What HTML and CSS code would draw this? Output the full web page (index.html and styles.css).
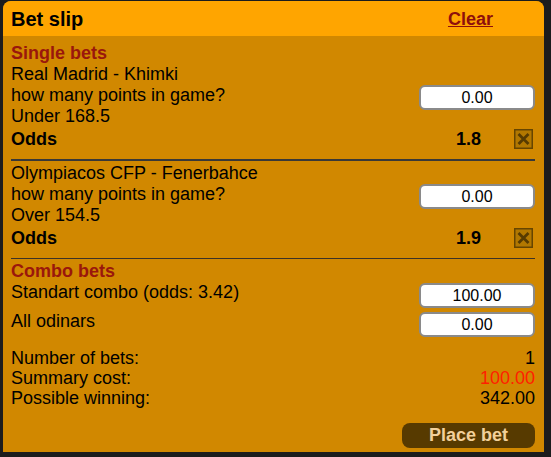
FILE: index.html
```html
<!DOCTYPE html>
<html lang="en">
<head>
  <meta charset="UTF-8">
  <meta name="viewport" content="width=device-width, initial-scale=1.0">
  <title>Bet slip</title>
  <link rel="stylesheet" href="styles.css">
</head>
<body>
  <div class="slip">
    <div class="slip-head">
      <span class="slip-title">Bet slip</span>
      <a class="clear" href="#">Clear</a>
    </div>
    <div class="slip-body">
      <div class="section-title">Single bets</div>
      <div class="bet">
        <div class="bet-info">
          <div>Real Madrid - Khimki</div>
          <div>how many points in game?</div>
          <div>Under 168.5</div>
          <input class="stake" type="text" value="0.00">
        </div>
        <div class="odds-row">
          <b class="odds-label">Odds</b>
          <b class="odds-val">1.8</b>
          <span class="remove">
            <svg width="19" height="20" viewBox="0 0 19 20">
              <rect x="0.75" y="0.75" width="17.5" height="18.5" fill="#b27800" stroke="#664500" stroke-width="1.5"/>
              <path d="M4.5 5L14.5 15M14.5 5L4.5 15" stroke="#573b00" stroke-width="2.8"/>
            </svg>
          </span>
        </div>
      </div>
      <hr class="sep sep-thick">
      <div class="bet">
        <div class="bet-info">
          <div>Olympiacos CFP - Fenerbahce</div>
          <div>how many points in game?</div>
          <div>Over 154.5</div>
          <input class="stake" type="text" value="0.00">
        </div>
        <div class="odds-row">
          <b class="odds-label">Odds</b>
          <b class="odds-val">1.9</b>
          <span class="remove">
            <svg width="19" height="20" viewBox="0 0 19 20">
              <rect x="0.75" y="0.75" width="17.5" height="18.5" fill="#b27800" stroke="#664500" stroke-width="1.5"/>
              <path d="M4.5 5L14.5 15M14.5 5L4.5 15" stroke="#573b00" stroke-width="2.8"/>
            </svg>
          </span>
        </div>
      </div>
      <hr class="sep">
      <div class="section-title">Combo bets</div>
      <div class="combo-row">
        <span>Standart combo (odds: 3.42)</span>
        <input class="stake" type="text" value="100.00">
      </div>
      <div class="combo-row">
        <span>All odinars</span>
        <input class="stake" type="text" value="0.00">
      </div>
      <div class="summary">
        <div class="sum-row"><span>Number of bets:</span><span>1</span></div>
        <div class="sum-row"><span>Summary cost:</span><span class="cost">100.00</span></div>
        <div class="sum-row"><span>Possible winning:</span><span>342.00</span></div>
      </div>
      <div class="actions">
        <button class="place-bet">Place bet</button>
      </div>
    </div>
  </div>
</body>
</html>
```
FILE: styles.css
```css
*{
  margin: 0;
  padding: 0;
  box-sizing: border-box;
}
html{
  background-color: #1c1c1d;
}
body{
  padding: 1px 7px 0 3px;
  font-family: "Liberation Sans", Arial, sans-serif;
  font-size: 18px;
  color: #000;
}
.slip{
  width: 541px;
  background-color: #d18800;
  border-radius: 8px 8px 0 0;
  overflow: hidden;
}
.slip-head{
  display: flex;
  align-items: center;
  justify-content: space-between;
  height: 35px;
  padding: 1px 51px 0 8px;
  background-color: #ffa500;
}
.slip-title{
  font-size: 20px;
  font-weight: bold;
}
.clear{
  font-weight: bold;
  color: #8e0f0c;
  text-decoration: underline;
}
.slip-body{
  padding: 7px 9px 4px 8px;
}
.section-title{
  line-height: 21px;
  font-weight: bold;
  color: #9a170c;
}
.bet-info{
  display: grid;
  grid-template-columns: 1fr auto;
  grid-auto-rows: 21px;
  line-height: 21px;
}
.bet-info > div{
  grid-column: 1;
}
.bet-info .stake{
  grid-column: 2;
  grid-row: 2 / span 2;
  align-self: start;
}
.stake{
  width: 116px;
  height: 25px;
  border: 2px solid #8a8a8a;
  border-radius: 6px;
  background-color: #fff;
  font-family: "Liberation Sans", Arial, sans-serif;
  font-size: 16px;
  color: #000;
  text-align: center;
  outline: none;
}
.odds-row{
  display: flex;
  align-items: center;
  height: 24px;
  line-height: 21px;
}
.odds-label{
  flex: 1;
}
.remove{
  display: flex;
  margin: 0 2px 0 33px;
}
.sep{
  border: none;
  height: 1px;
  margin: 8px 0 2px;
  background-color: #3d3226;
}
.sep-thick{
  height: 2px;
  background-color: #383838;
}
.combo-row{
  display: flex;
  justify-content: space-between;
  align-items: flex-start;
  height: 29px;
  line-height: 21px;
}
.combo-row .stake{
  margin-top: 1px;
}
.summary{
  margin-top: 8px;
  line-height: 20px;
}
.sum-row{
  display: flex;
  justify-content: space-between;
}
.cost{
  color: #ff2000;
}
.actions{
  display: flex;
  justify-content: flex-end;
  margin-top: 15px;
}
.place-bet{
  width: 133px;
  height: 25px;
  border: none;
  border-radius: 8px;
  background-color: #573a00;
  color: #f2d09a;
  font-family: "Liberation Sans", Arial, sans-serif;
  font-size: 18px;
  font-weight: bold;
}
```
